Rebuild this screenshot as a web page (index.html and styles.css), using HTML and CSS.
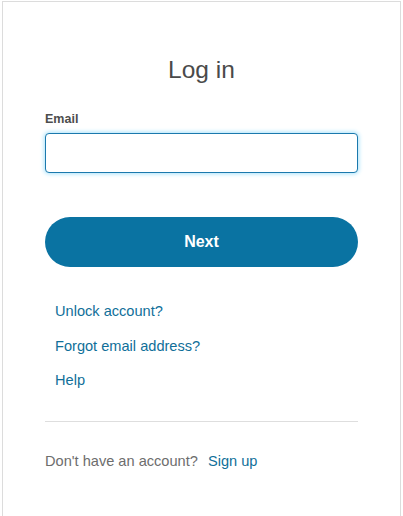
FILE: index.html
```html
<!DOCTYPE html>
<html lang="en">
<head>
  <meta charset="UTF-8" />
  <meta name="viewport" content="width=device-width, initial-scale=1.0" />
  <title>Log in</title>
  <link rel="stylesheet" href="styles.css">
</head>
<body>
  <div class="card">
    <h1>Log in</h1>
    <form class="login-form" onsubmit="return false">
      <label for="email">Email</label>
      <input type="email" id="email" />
      <button type="submit" class="next-btn">Next</button>
    </form>
    <ul class="links">
      <li><a href="#">Unlock account?</a></li>
      <li><a href="#">Forgot email address?</a></li>
      <li><a href="#">Help</a></li>
    </ul>
    <div class="signup">
      Don't have an account? <a href="#">Sign up</a>
    </div>
  </div>
</body>
</html>
```

FILE: styles.css
```css
html, body {
  height: 100%;
}
body {
  margin: 0;
  background: #fff;
  font-family: "Liberation Sans", Arial, sans-serif;
  color: #444;
}
.card {
  box-sizing: border-box;
  margin: 1px 2px 0;
  min-height: calc(100% - 1px);
  border: 1px solid #dcdcdc;
  border-bottom: none;
  padding: 53px 42px 40px;
}
h1 {
  margin: 0;
  text-align: center;
  font-size: 24.5px;
  font-weight: normal;
  line-height: 30px;
  color: #4a4a4a;
}
.login-form {
  margin-top: 26px;
  display: flex;
  flex-direction: column;
}
.login-form label {
  font-size: 12.5px;
  font-weight: bold;
  color: #4d4d4d;
  line-height: 16px;
}
.login-form input {
  margin-top: 6px;
  height: 40px;
  box-sizing: border-box;
  border: 1px solid #1b79ad;
  border-radius: 4px;
  box-shadow: 0 0 4px 1px #a9e3fb;
  outline: none;
  font-size: 14px;
  padding: 0 10px;
}
.next-btn {
  margin-top: 44px;
  height: 50px;
  border: none;
  border-radius: 25px;
  background: #0a73a2;
  color: #fff;
  font-family: inherit;
  font-size: 16px;
  font-weight: bold;
  cursor: pointer;
}
.links {
  list-style: none;
  margin: 34px 0 0;
  padding: 0 0 0 10px;
}
.links li {
  line-height: 20px;
  margin-bottom: 14.5px;
}
.links a, .signup a {
  color: #106f99;
  text-decoration: none;
  font-size: 14.6px;
}
.signup {
  margin-top: 31px;
  border-top: 1px solid #dedede;
  padding-top: 29px;
  font-size: 14.6px;
  line-height: 20px;
  color: #6d6d6d;
}
.signup a {
  margin-left: 6px;
}
```
